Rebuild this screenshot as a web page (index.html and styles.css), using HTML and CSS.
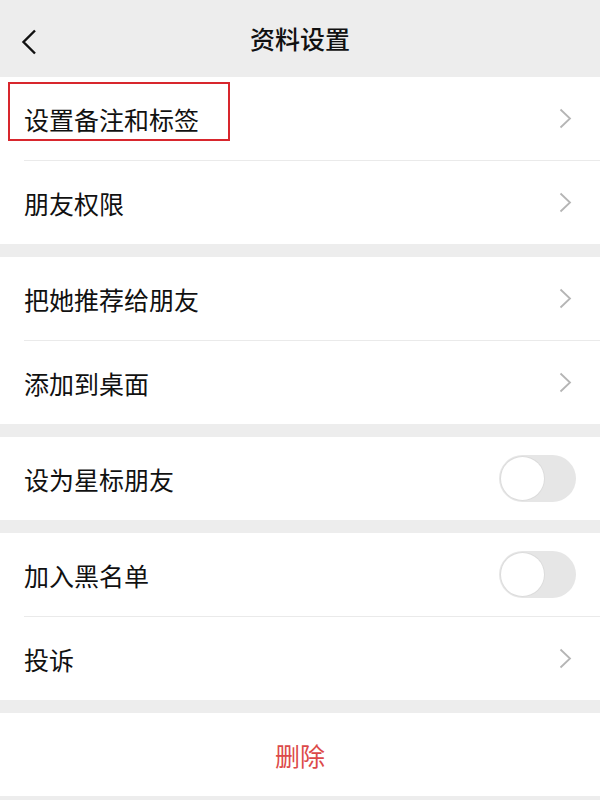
FILE: index.html
```html
<!DOCTYPE html>
<html lang="zh-CN">
<head>
<meta charset="utf-8">
<title>资料设置</title>
<link rel="stylesheet" href="styles.css">
</head>
<body>
<div class="page">
  <header class="nav">
    <span class="back">
      <svg width="16" height="26" viewBox="0 0 16 26"><path d="M14 1.5 L2.5 13 L14 24.5" fill="none" stroke="#111" stroke-width="2.4" stroke-linejoin="miter"/></svg>
    </span>
    <h1 class="title">资料设置</h1>
  </header>

  <section class="group">
    <div class="row">
      <span class="label highlighted">设置备注和标签</span>
      <svg class="arrow" width="13" height="21" viewBox="0 0 13 21"><path d="M1.5 1.5 L11 10.5 L1.5 19.5" fill="none" stroke="#b5b5b5" stroke-width="1.8"/></svg>
    </div>
    <div class="row">
      <span class="label">朋友权限</span>
      <svg class="arrow" width="13" height="21" viewBox="0 0 13 21"><path d="M1.5 1.5 L11 10.5 L1.5 19.5" fill="none" stroke="#b5b5b5" stroke-width="1.8"/></svg>
    </div>
  </section>

  <section class="group">
    <div class="row">
      <span class="label">把她推荐给朋友</span>
      <svg class="arrow" width="13" height="21" viewBox="0 0 13 21"><path d="M1.5 1.5 L11 10.5 L1.5 19.5" fill="none" stroke="#b5b5b5" stroke-width="1.8"/></svg>
    </div>
    <div class="row">
      <span class="label">添加到桌面</span>
      <svg class="arrow" width="13" height="21" viewBox="0 0 13 21"><path d="M1.5 1.5 L11 10.5 L1.5 19.5" fill="none" stroke="#b5b5b5" stroke-width="1.8"/></svg>
    </div>
  </section>

  <section class="group">
    <div class="row">
      <span class="label">设为星标朋友</span>
      <span class="switch"><span class="knob"></span></span>
    </div>
  </section>

  <section class="group">
    <div class="row">
      <span class="label">加入黑名单</span>
      <span class="switch"><span class="knob"></span></span>
    </div>
    <div class="row">
      <span class="label">投诉</span>
      <svg class="arrow" width="13" height="21" viewBox="0 0 13 21"><path d="M1.5 1.5 L11 10.5 L1.5 19.5" fill="none" stroke="#b5b5b5" stroke-width="1.8"/></svg>
    </div>
  </section>

  <section class="group">
    <div class="row center">
      <span class="danger">删除</span>
    </div>
  </section>
</div>
</body>
</html>
```

FILE: styles.css
```css
* { box-sizing: border-box; }
html, body {
  margin: 0;
  padding: 0;
  background: #ededed;
  font-family: "Noto Sans CJK SC", "Noto Sans", sans-serif;
}
.page {
  width: 600px;
  height: 800px;
  display: flex;
  flex-direction: column;
  gap: 13px;
  overflow: hidden;
}
.nav {
  height: 77px;
  margin-bottom: -13px;
  position: relative;
  display: flex;
  align-items: center;
  justify-content: center;
  background: #ededed;
}
.back {
  position: absolute;
  left: 21px;
  top: 29px;
  display: flex;
}
.title {
  margin: 0;
  font-size: 25px;
  font-weight: 500;
  color: #111;
  line-height: 1;
  padding-bottom: 1px;
}
.group {
  background: #fff;
  display: flex;
  flex-direction: column;
}
.row {
  height: 83px;
  display: flex;
  align-items: center;
  justify-content: space-between;
  padding: 0 28px 0 24px;
  position: relative;
}
.row + .row {
  height: 84px;
}
.row + .row::before {
  content: "";
  position: absolute;
  left: 24px;
  right: 0;
  top: 0;
  height: 1px;
  background: #eaeaea;
}
.label {
  font-size: 25px;
  color: #111;
  line-height: 1;
  position: relative;
  top: 1px;
}
.highlighted::after {
  content: "";
  position: absolute;
  left: -16px;
  right: -31px;
  top: -25px;
  bottom: -9px;
  border: 2px solid #d8262d;
}
.arrow { display: block; }
.switch {
  width: 77px;
  height: 47px;
  border-radius: 24px;
  background: #e6e6e6;
  margin-right: -4px;
  padding: 2px;
  display: flex;
}
.knob {
  width: 43px;
  height: 43px;
  border-radius: 50%;
  background: #fff;
  box-shadow: 0 0 0 1px #dcdcdc;
}
.center {
  justify-content: center;
  padding: 0;
}
.danger {
  font-size: 25px;
  color: #dc4a49;
  line-height: 1;
  position: relative;
  top: 1px;
}
```
